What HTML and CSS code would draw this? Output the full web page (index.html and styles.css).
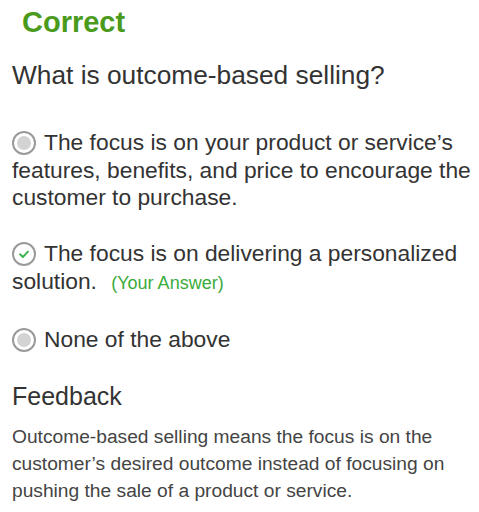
FILE: index.html
```html
<!DOCTYPE html>
<html>
<head>
<meta charset="utf-8">
<link rel="stylesheet" href="styles.css">
</head>
<body>
<div class="quiz">
  <div class="status">Correct</div>
  <div class="question">What is outcome-based selling?</div>
  <div class="options">
    <div class="option">
      <span class="radio"><span class="dot"></span></span>The focus is on your product or service’s features, benefits, and price to encourage the customer to purchase.
    </div>
    <div class="option">
      <span class="radio check"><svg width="16" height="16" viewBox="0 0 16 16"><path d="M4 8.3 L6.9 11 L12 5.6" fill="none" stroke="#3bb44a" stroke-width="1.9" stroke-linecap="round" stroke-linejoin="round"/></svg></span>The focus is on delivering a personalized solution. <span class="yours">(Your Answer)</span>
    </div>
    <div class="option">
      <span class="radio"><span class="dot"></span></span>None of the above
    </div>
  </div>
  <div class="fb-title">Feedback</div>
  <div class="fb-body">Outcome-based selling means the focus is on the customer’s desired outcome instead of focusing on pushing the sale of a product or service.</div>
</div>
</body>
</html>
```
FILE: styles.css
```css
html, body { margin: 0; padding: 0; background: #fff; }
body { font-family: "Liberation Sans", Arial, sans-serif; color: #333; }
.quiz { padding: 7px 4px 0 12px; }
.status { color: #4a9a1c; font-weight: bold; font-size: 29px; line-height: 30px; padding-left: 10px; }
.question { font-size: 26.3px; line-height: 32px; margin-top: 22px; color: #333; }
.options { margin-top: 38px; display: flex; flex-direction: column; gap: 28px; }
.option { font-size: 22.8px; line-height: 27.7px; color: #333; }
.radio { display: inline-flex; align-items: center; justify-content: center; width: 24px; height: 24px; border: 2px solid #9a9a9a; border-radius: 50%; vertical-align: top; margin-top: 2px; margin-right: 8px; box-sizing: border-box; }
.dot { width: 14px; height: 14px; border-radius: 50%; background: #d3d3d3; }
.yours { font-size: 18px; color: #3bab3b; margin-left: 8px; }
.fb-title { font-size: 25px; line-height: 32px; margin-top: 27px; color: #333; }
.fb-body { font-size: 19.2px; line-height: 27px; margin-top: 11px; color: #444; }
```
